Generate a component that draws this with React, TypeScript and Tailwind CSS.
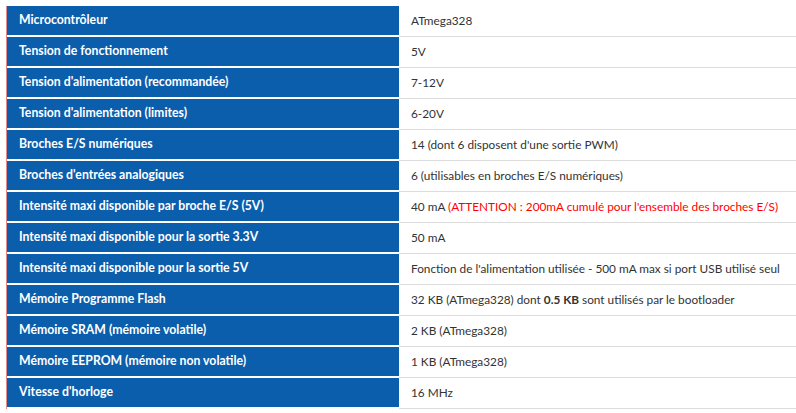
import React from "react";

type Row = { label: string; value: React.ReactNode };

const rows: Row[] = [
  { label: "Microcontrôleur", value: "ATmega328" },
  { label: "Tension de fonctionnement", value: "5V" },
  { label: "Tension d'alimentation (recommandée)", value: "7-12V" },
  { label: "Tension d'alimentation (limites)", value: "6-20V" },
  { label: "Broches E/S numériques", value: "14 (dont 6 disposent d'une sortie PWM)" },
  { label: "Broches d'entrées analogiques", value: "6 (utilisables en broches E/S numériques)" },
  {
    label: "Intensité maxi disponible par broche E/S (5V)",
    value: (
      <>
        40 mA <span className="text-[#ff0000]">(ATTENTION : 200mA cumulé pour l'ensemble des broches E/S)</span>
      </>
    ),
  },
  { label: "Intensité maxi disponible pour la sortie 3.3V", value: "50 mA" },
  {
    label: "Intensité maxi disponible pour la sortie 5V",
    value: "Fonction de l'alimentation utilisée - 500 mA max si port USB utilisé seul",
  },
  {
    label: "Mémoire Programme Flash",
    value: (
      <>
        32 KB (ATmega328) dont <b className="font-bold">0.5 KB</b> sont utilisés par le bootloader
      </>
    ),
  },
  { label: "Mémoire SRAM (mémoire volatile)", value: "2 KB (ATmega328)" },
  { label: "Mémoire EEPROM (mémoire non volatile)", value: "1 KB (ATmega328)" },
  { label: "Vitesse d'horloge", value: "16 MHz" },
];

export default function App() {
  return (
    <div className="w-[796px] h-[413px] bg-white pt-[6px] pl-[6px]" style={{ fontFamily: "Lato, 'Open Sans', sans-serif" }}>
      <div className="border-l border-[#e08a8a] flex flex-col">
        {rows.map((r, i) => (
          <div key={i} className="flex h-[31px]">
            <div className="w-[392px] h-full bg-[#0b5eac] border-b-2 border-white flex items-center pl-[12px] text-white font-bold text-[12.25px]">
              {r.label}
            </div>
            <div className="flex-1 h-full border-b border-[#dddddd] flex items-center pl-[12px] text-[#333333] text-[11.8px]">
              <span>{r.value}</span>
            </div>
          </div>
        ))}
      </div>
    </div>
  );
}
